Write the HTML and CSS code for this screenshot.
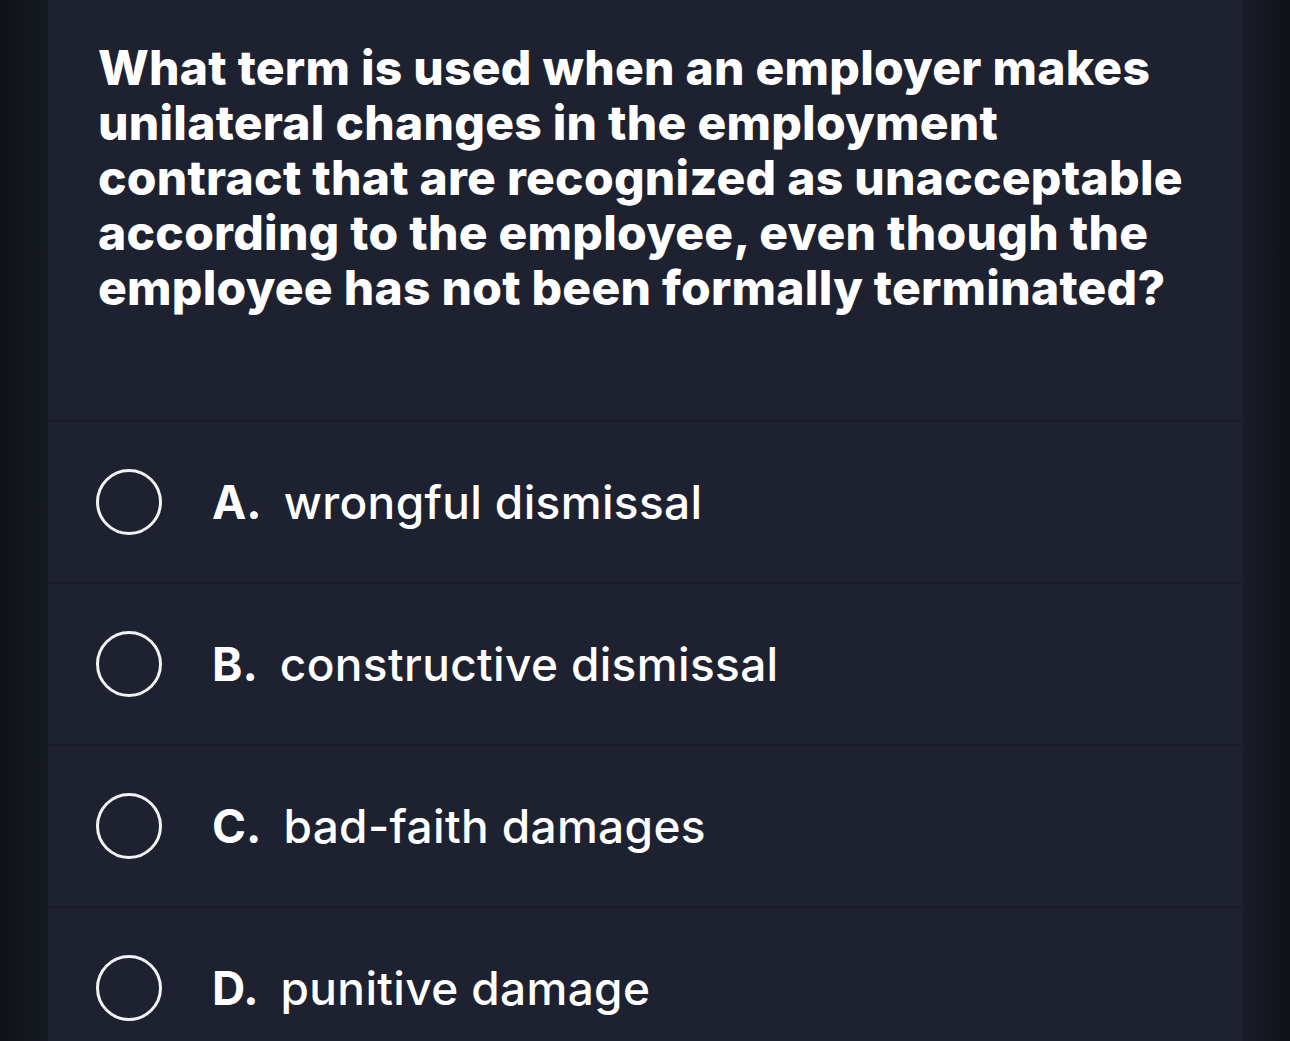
FILE: index.html
```html
<!DOCTYPE html>
<html lang="en">
<head>
<meta charset="utf-8">
<title>Question</title>
<link rel="stylesheet" href="styles.css">
</head>
<body>
<div class="page">
  <div class="gutter gutter-left"></div>
  <main class="panel">
    <section class="question">
      <h1 class="question-text">What term is used when an employer makes<br>unilateral changes in the employment<br>contract that are recognized as unacceptable<br>according to the employee, even though the<br>employee has not been formally terminated?</h1>
    </section>
    <ul class="options">
      <li class="option"><span class="radio"></span><span class="letter">A.</span><span class="answer">wrongful dismissal</span></li>
      <li class="option"><span class="radio"></span><span class="letter">B.</span><span class="answer">constructive dismissal</span></li>
      <li class="option"><span class="radio"></span><span class="letter">C.</span><span class="answer">bad-faith damages</span></li>
      <li class="option"><span class="radio"></span><span class="letter">D.</span><span class="answer">punitive damage</span></li>
    </ul>
  </main>
  <div class="gutter gutter-right"></div>
</div>
</body>
</html>
```
FILE: styles.css
```css
* { box-sizing: border-box; }
html, body {
  margin: 0;
  padding: 0;
  height: 100%;
  background: #12151c;
  overflow: hidden;
}
.page {
  display: flex;
  width: 1290px;
  height: 1041px;
  font-family: Inter, "Noto Sans", sans-serif;
  color: #ffffff;
}
.gutter {
  width: 48px;
  flex: none;
}
.gutter-left {
  background: linear-gradient(to right, #0f1218, #161a22);
}
.gutter-right {
  width: 47px;
  background: linear-gradient(to right, #1a1d26, #0e1117);
}
.panel {
  flex: 1;
  background: #1e2230;
  display: flex;
  flex-direction: column;
  overflow: hidden;
}
.question {
  flex: none;
  height: 422px;
  padding: 40px 0 0 50px;
  border-bottom: 2px solid #1a1d27;
}
.question-text {
  margin: 0;
  font-size: 48px;
  line-height: 55px;
  font-weight: 800;
  letter-spacing: 0.25px;
  white-space: nowrap;
}
.options {
  flex: none;
  list-style: none;
  margin: 0;
  padding: 0;
}
.option {
  height: 162px;
  display: flex;
  align-items: center;
  padding-left: 48px;
  border-bottom: 2px solid #1a1d27;
}
.radio {
  width: 66px;
  height: 66px;
  border: 3px solid #f2f2f2;
  border-radius: 50%;
  flex: none;
  margin-right: 50px;
}
.letter {
  font-size: 46px;
  font-weight: 700;
  margin-right: 22px;
}
.answer {
  font-size: 46px;
  font-weight: 500;
  letter-spacing: 0.35px;
}
```
